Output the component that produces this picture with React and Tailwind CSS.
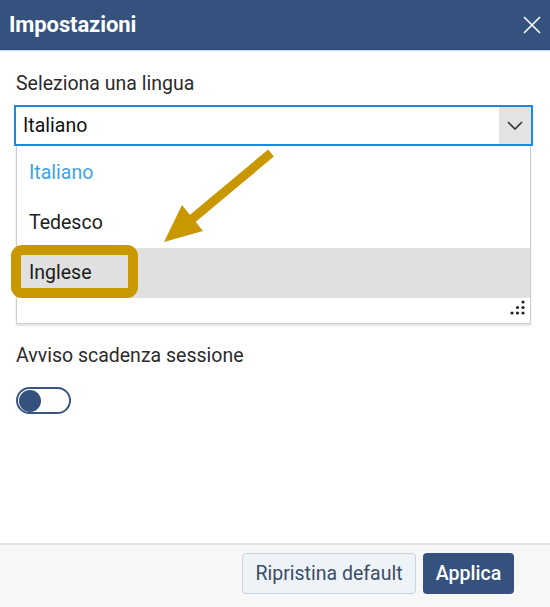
import { useState } from "react";

const SettingsDialog = () => {
  const [sessionWarn, setSessionWarn] = useState(false);
  const languages = ["Italiano", "Tedesco", "Inglese"];

  return (
    <div className="w-[550px] h-[607px] bg-white flex flex-col font-['Roboto',sans-serif] text-[#222]">
      <div className="h-[51px] shrink-0 bg-[#34527d] flex items-center justify-between pl-[9px] pr-[9px] border-b border-[#c9d3df]">
        <h2 className="text-[22px] leading-[26px] font-bold text-white tracking-[-0.1px]">Impostazioni</h2>
        <svg width="18" height="18" viewBox="0 0 18 18">
          <path d="M1 1 L17 17 M17 1 L1 17" stroke="#fff" strokeWidth="1.6" fill="none" />
        </svg>
      </div>

      <div className="flex-1 px-[14px] pt-[21px] relative">
        <div className="text-[19.5px] leading-[24px] text-[#2b2b2b] pl-[2px]">Seleziona una lingua</div>

        <div className="mt-[9px] w-[519px] h-[41px] border-2 border-[#1e88e5] flex items-stretch">
          <div className="flex-1 flex items-center pl-[7px] text-[19.5px] text-[#111]">Italiano</div>
          <div className="w-[32px] bg-[#e3e3e3] flex items-center justify-center">
            <svg width="16" height="9" viewBox="0 0 16 9">
              <path d="M1 1 L8 8 L15 1" stroke="#333" strokeWidth="1.6" fill="none" />
            </svg>
          </div>
        </div>

        <div className="ml-[2px] w-[515px] h-[178px] pt-[2px] border border-t-0 border-[#cfcfcf] shadow-[0_2px_2px_rgba(0,0,0,0.12)] flex flex-col">
          {languages.map((lang, i) => (
            <div
              key={lang}
              className={`h-[50px] shrink-0 flex items-center pl-[12px] text-[19.5px] ${
                i === 0 ? "text-[#3ea2e0]" : "text-[#1b1b1b]"
              } ${i === 2 ? "bg-[#e0e0e0]" : ""}`}
            >
              {lang}
            </div>
          ))}
          <div className="flex-1 flex items-end justify-end pr-[5px] pb-[8px]">
            <svg width="15" height="15" viewBox="0 0 15 15">
              <circle cx="13" cy="2" r="1.6" fill="#222" />
              <circle cx="7.5" cy="7.5" r="1.6" fill="#222" />
              <circle cx="13" cy="7.5" r="1.6" fill="#222" />
              <circle cx="2" cy="13" r="1.6" fill="#222" />
              <circle cx="7.5" cy="13" r="1.6" fill="#222" />
              <circle cx="13" cy="13" r="1.6" fill="#222" />
            </svg>
          </div>
        </div>

        <div className="absolute left-[11px] top-[194px] w-[127px] h-[53px] border-[10px] border-[#c99700] rounded-[11px]" />
        <svg className="absolute left-[150px] top-[89px]" width="130" height="110" viewBox="0 0 130 110">
          <path d="M42 79 L121 13" stroke="#c99700" strokeWidth="9" fill="none" />
          <polygon points="14,102 32,65 53,91" fill="#c99700" />
        </svg>

        <div className="mt-[20px] text-[19.5px] leading-[24px] text-[#2b2b2b] pl-[2px]">Avviso scadenza sessione</div>
        <button
          onClick={() => setSessionWarn(!sessionWarn)}
          className="mt-[19px] ml-[2px] w-[55px] h-[27px] rounded-full border-2 border-[#3a5580] bg-white flex items-center px-[1px]"
        >
          <span className="w-[22px] h-[22px] rounded-full bg-[#34527d]" />
        </button>
      </div>

      <div className="h-[64px] shrink-0 bg-[#f7f7f7] border-t-2 border-[#e4e4e4] flex items-start justify-end gap-[7px] pt-[8px] pr-[36px]">
        <button className="h-[41px] w-[174px] flex items-center justify-center bg-[#eef3f8] border border-[#c8d4e0] rounded-[4px] text-[19.5px] text-[#3b4d68]">
          Ripristina default
        </button>
        <button className="h-[41px] w-[91px] flex items-center justify-center bg-[#34527d] rounded-[4px] text-[19.5px] font-medium text-white">
          Applica
        </button>
      </div>
    </div>
  );
};

export default SettingsDialog;
